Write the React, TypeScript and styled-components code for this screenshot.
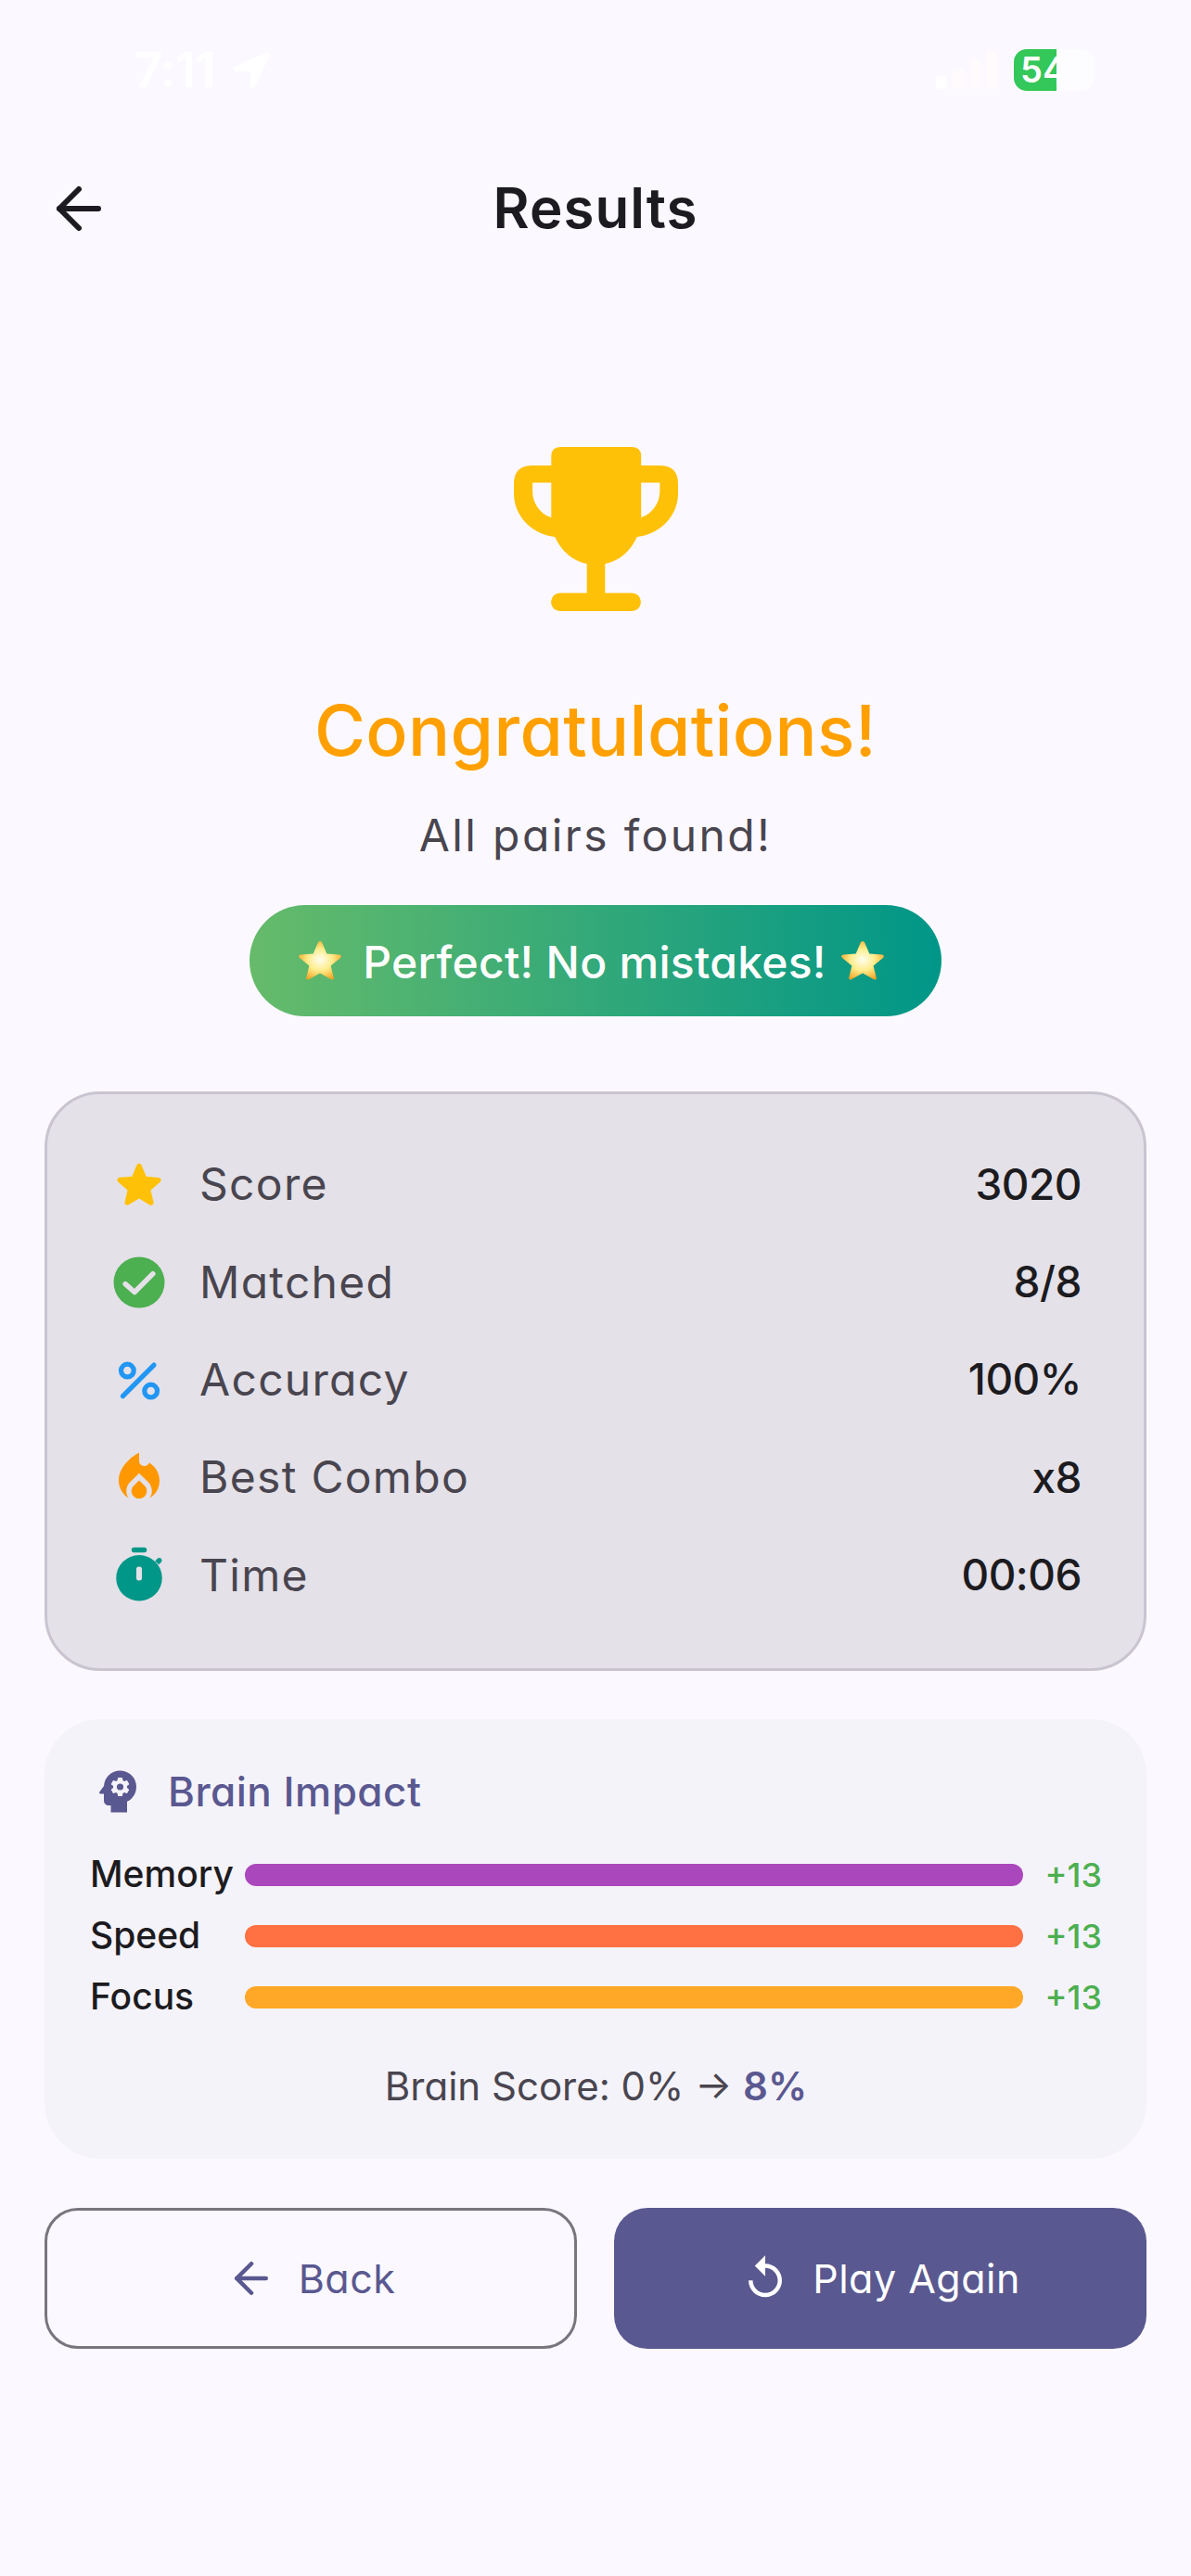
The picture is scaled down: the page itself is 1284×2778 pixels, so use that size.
import React from "react";
import styled, { createGlobalStyle } from "styled-components";
import { ArrowLeft } from "lucide-react";
import { MdPsychology, MdReplay } from "react-icons/md";

const GlobalStyle = createGlobalStyle`
  html, body {
    margin: 0;
    padding: 0;
    background: #fbf9ff;
  }
  * {
    box-sizing: border-box;
  }
  body {
    font-family: Inter, "Liberation Sans", sans-serif;
    font-feature-settings: "cv11" 1;
  }
`;

const stats = [
  { label: "Score", value: "3020", icon: "star" },
  { label: "Matched", value: "8/8", icon: "check" },
  { label: "Accuracy", value: "100%", icon: "percent" },
  { label: "Best Combo", value: "x8", icon: "fire" },
  { label: "Time", value: "00:06", icon: "timer" },
];

const impacts = [
  { label: "Memory", color: "#ab47bc" },
  { label: "Speed", color: "#ff7043" },
  { label: "Focus", color: "#ffa726" },
];

const StatIcon = ({ name }: { name: string }) => {
  if (name === "star") {
    return (
      <IconSvg viewBox="0 0 24 24">
        <path
          fill="#ffc107"
          d="M12 17.27l4.15 2.51c.76.46 1.69-.22 1.49-1.08l-1.1-4.72 3.67-3.18c.67-.58.31-1.68-.57-1.75l-4.83-.41-1.89-4.46c-.34-.81-1.5-.81-1.84 0L9.19 8.63l-4.83.41c-.88.07-1.24 1.17-.57 1.75l3.67 3.18-1.1 4.72c-.2.86.73 1.54 1.49 1.08l4.15-2.5z"
        />
      </IconSvg>
    );
  }
  if (name === "check") {
    return (
      <IconSvg viewBox="0 0 24 24">
        <circle cx="12" cy="12" r="10" fill="#4caf50" />
        <path d="M6.600 12.600l3.600 3.200 7.200-7.200" fill="none" stroke="#e4e1e8" strokeWidth="2" strokeLinecap="round" strokeLinejoin="round" />
      </IconSvg>
    );
  }
  if (name === "percent") {
    return (
      <IconSvg viewBox="0 0 24 24">
        <g fill="none" stroke="#2196f3" strokeWidth="1.9" strokeLinecap="round">
          <circle cx="7.4" cy="8.4" r="2.5" />
          <circle cx="16.6" cy="16.4" r="2.5" />
          <path d="M17.8 6.2L5.6 18.4" />
        </g>
      </IconSvg>
    );
  }
  if (name === "fire") {
    return (
      <IconSvg viewBox="0 0 24 24">
        <path
          fill="#ff9800"
          d="M12 12.9l-2.13 2.09c-.56.56-.87 1.29-.87 2.07C9 18.68 10.35 20 12 20s3-1.32 3-2.94c0-.78-.31-1.52-.87-2.07L12 12.9z"
        />
        <path
          fill="#ff9800"
          d="M16 6l-.44.55C14.38 8.02 12 7.19 12 5.3V2S4 6 4 13c0 2.92 1.56 5.47 3.89 6.86-.56-.79-.89-1.76-.89-2.8 0-1.32.52-2.56 1.47-3.5L12 10.1l3.53 3.47c.95.93 1.47 2.17 1.47 3.5 0 1.02-.31 1.96-.85 2.75 1.89-1.15 3.29-3.06 3.71-5.3.66-3.52-1.07-6.85-3.86-8.52z"
        />
      </IconSvg>
    );
  }
  return (
    <IconSvg viewBox="0 0 24 24">
      <rect x="9" y="1" width="6" height="2" rx="1" fill="#009688" />
      <path fill="#009688" d="M18.3 6.3l1-1a1 1 0 0 1 1.4 1.4l-1 1z" />
      <circle cx="12" cy="13" r="9" fill="#009688" />
      <rect x="10.900" y="8.500" width="2.200" height="5.500" rx="1" fill="#e4e1e8" />
    </IconSvg>
  );
};

const EmojiStar = ({ id }: { id: string }) => (
  <EmojiSvg viewBox="0 0 46 42">
    <defs>
      <radialGradient id={id} cx="50%" cy="48%" r="58%">
        <stop offset="0%" stopColor="#fffef0" />
        <stop offset="50%" stopColor="#ffec8a" />
        <stop offset="100%" stopColor="#f5a01e" />
      </radialGradient>
    </defs>
    <path
      fill={`url(#${id})`}
      d="M23 0c1 0 1.8.7 2.3 1.8l5 11.6 13.4 1.2c2.2.2 2.9 2 1.3 3.3L34.600 26.500l3.100 12.500c.5 2.100-1.100 3.200-2.900 2.100L23 34.500l-11.800 6.600c-1.800 1.100-3.400 0-2.900-2.100l3.100-12.500L1 17.900c-1.600-1.300-.9-3.100 1.300-3.300l13.400-1.200 5-11.600C21.200.7 22 0 23 0z"
    />
  </EmojiSvg>
);

export default function App() {
  return (
    <Screen>
      <GlobalStyle />
      <StatusBar>
        <StatusLeft>
          <Clock>7:11</Clock>
          <svg width="42" height="42" viewBox="0 0 42 42">
            <path fill="#fff" d="M38 1.500c2.200-1 3.800.6 2.800 2.800L24.500 38.800c-1.200 2.600-4.500 2-4.500-1V22.500c0-.5-.3-.8-.8-.8H4c-3 0-3.500-3.300-1-4.500z" />
          </svg>
        </StatusLeft>
        <StatusRight>
          <Signal>
            <SignalBar $height={14} $faint={false} />
            <SignalBar $height={22} $faint />
            <SignalBar $height={32} $faint />
            <SignalBar $height={41} $faint />
          </Signal>
          <Battery>
            <BatteryFill style={{ width: "53%" }} />
            <BatteryLabel>54</BatteryLabel>
          </Battery>
        </StatusRight>
      </StatusBar>

      <AppBar>
        <BackIcon size={72} strokeWidth={2} color="#1c1b1f" />
        <Title>Results</Title>
      </AppBar>

      <Hero>
        <svg width="177" height="177" viewBox="0 0 180 177" preserveAspectRatio="none">
          <path
            fill="#ffc107"
            fillRule="evenodd"
            d="M51 0H129.500Q139.500 0 139.500 10V20H160Q180 20 180 40V50C180 75 160 94 135 97C128 112 116 123 100 126V157.500H129.500A9.750 9.750 0 0 1 129.500 177H50.500A9.750 9.750 0 0 1 50.500 157.500H80V126C64 123 52 112 45 97C20 94 0 75 0 50V40Q0 20 20 20H41V10Q41 0 51 0ZM20.500 38.500H41V76C28 72 20.500 60 20.500 48ZM139.500 38.500H160V48C160 60 152 72 139.500 76Z"
          />
        </svg>
        <Congrats>Congratulations!</Congrats>
        <Subtitle>All pairs found!</Subtitle>
        <PerfectPill>
          <EmojiStar id="starLeft" />
          <PillText>Perfect! No mistakes!</PillText>
          <EmojiStar id="starRight" />
        </PerfectPill>
      </Hero>

      <StatsCard>
        {stats.map((item) => (
          <StatRow key={item.label}>
            <StatIcon name={item.icon} />
            <StatLabel>{item.label}</StatLabel>
            <StatValue>{item.value}</StatValue>
          </StatRow>
        ))}
      </StatsCard>

      <BrainCard>
        <BrainHeader>
          <MdPsychology size={60} color="#5a5890" />
          <BrainTitle>Brain Impact</BrainTitle>
        </BrainHeader>
        <ImpactList>
          {impacts.map((item) => (
            <ImpactRow key={item.label}>
              <ImpactLabel>{item.label}</ImpactLabel>
              <ImpactBar $color={item.color} />
              <ImpactValue>+13</ImpactValue>
            </ImpactRow>
          ))}
        </ImpactList>
        <BrainScore>
          Brain Score: 0% → <BrainScoreValue>8%</BrainScoreValue>
        </BrainScore>
      </BrainCard>

      <Actions>
        <OutlineButton>
          <ArrowLeft size={54} strokeWidth={2} color="#5a5890" />
          Back
        </OutlineButton>
        <FilledButton>
          <MdReplay size={54} color="#fff" />
          Play Again
        </FilledButton>
      </Actions>
    </Screen>
  );
}

const Screen = styled.div`
  width: 1284px;
  height: 2778px;
  background: #fbf9ff;
  display: flex;
  flex-direction: column;
  overflow: hidden;
`;

const StatusBar = styled.div`
  height: 141px;
  padding: 53px 104px 0 145px;
  display: flex;
  justify-content: space-between;
  align-items: flex-start;
`;

const StatusLeft = styled.div`
  display: flex;
  align-items: center;
  gap: 18px;
  height: 45px;
`;

const Clock = styled.span`
  font-size: 52px;
  font-weight: 600;
  line-height: 45px;
  letter-spacing: -0.5px;
  color: #fff;
`;

const StatusRight = styled.div`
  display: flex;
  align-items: flex-end;
  gap: 18px;
  height: 45px;
`;

const Signal = styled.div`
  display: flex;
  align-items: flex-end;
  gap: 6px;
  padding-bottom: 2px;
`;

const SignalBar = styled.div<{ $height: number; $faint: boolean }>`
  width: 12px;
  height: ${(props) => props.$height}px;
  border-radius: 4px;
  background: ${(props) => (props.$faint ? "#fffbfd" : "#ffffff")};
`;

const Battery = styled.div`
  position: relative;
  width: 87px;
  height: 45px;
  border-radius: 14px;
  background: #fdfcff;
  overflow: hidden;
`;

const BatteryFill = styled.div`
  position: absolute;
  left: 0;
  top: 0;
  bottom: 0;
  background: #34c759;
`;

const BatteryLabel = styled.span`
  position: absolute;
  left: 7px;
  top: 0;
  font-size: 38px;
  line-height: 45px;
  font-weight: 600;
  color: #fff;
`;

const AppBar = styled.div`
  position: relative;
  height: 168px;
  display: flex;
  align-items: center;
  justify-content: center;
`;

const BackIcon = styled(ArrowLeft)`
  position: absolute;
  left: 49px;
  top: 48px;
`;

const Title = styled.h1`
  margin: 0 0 2px;
  font-size: 60px;
  line-height: 84px;
  font-weight: 600;
  letter-spacing: 1px;
  color: #1c1b1f;
`;

const Hero = styled.div`
  padding-top: 173px;
  display: flex;
  flex-direction: column;
  align-items: center;
`;

const Congrats = styled.div`
  margin-top: 79px;
  font-size: 75px;
  line-height: 100px;
  font-weight: 500;
  letter-spacing: 0.4px;
  color: #ffa000;
`;

const Subtitle = styled.div`
  margin-top: 27px;
  font-size: 48px;
  line-height: 72px;
  font-weight: 400;
  letter-spacing: 2.4px;
  color: #49454f;
`;

const PerfectPill = styled.div`
  margin-top: 39px;
  width: 746px;
  height: 120px;
  padding-right: 9px;
  border-radius: 60px;
  background: linear-gradient(90deg, #66bb6a, #009688);
  display: flex;
  align-items: center;
  justify-content: center;
`;

const EmojiSvg = styled.svg`
  width: 46px;
  height: 42px;
  flex: none;
`;

const PillText = styled.span`
  margin: 4px 16px 0 23px;
  font-size: 48px;
  line-height: 72px;
  font-weight: 500;
  letter-spacing: 0.3px;
  color: #fff;
`;

const StatsCard = styled.div`
  margin: 81px 48px 0;
  height: 625px;
  padding: 45px 67px 0 66px;
  border: 3px solid #cac4d0;
  border-radius: 60px;
  background: #e4e1e8;
`;

const StatRow = styled.div`
  height: 105.4px;
  display: flex;
  align-items: center;
`;

const IconSvg = styled.svg`
  width: 66px;
  height: 66px;
  flex: none;
`;

const StatLabel = styled.span`
  margin: 0 0 2px 32px;
  font-size: 48px;
  font-weight: 400;
  letter-spacing: 1.3px;
  color: #49454f;
`;

const StatValue = styled.span`
  margin: 0 0 2px auto;
  font-size: 46px;
  font-weight: 500;
  letter-spacing: -0.5px;
  color: #1c1b1f;
`;

const BrainCard = styled.div`
  margin: 52px 48px 0;
  height: 474px;
  padding: 48px 48px 0 49px;
  border-radius: 60px;
  background: #f5f3fa;
`;

const BrainHeader = styled.div`
  height: 60px;
  display: flex;
  align-items: center;
  gap: 24px;
`;

const BrainTitle = styled.span`
  font-size: 44px;
  font-weight: 500;
  letter-spacing: 0.5px;
  color: #5a5890;
`;

const ImpactList = styled.div`
  margin-top: 27px;
  display: flex;
  flex-direction: column;
`;

const ImpactRow = styled.div`
  height: 66px;
  display: grid;
  grid-template-columns: 167px 1fr 85px;
  align-items: center;
`;

const ImpactLabel = styled.span`
  padding-bottom: 3px;
  font-size: 39px;
  font-weight: 500;
  color: #1c1b1f;
`;

const ImpactBar = styled.div<{ $color: string }>`
  height: 24px;
  border-radius: 12px;
  background: ${(props) => props.$color};
`;

const ImpactValue = styled.span`
  justify-self: end;
  font-size: 36px;
  font-weight: 500;
  color: #4caf50;
`;

const BrainScore = styled.div`
  margin-top: 33px;
  line-height: 60px;
  text-align: center;
  font-size: 42px;
  font-weight: 400;
  color: #49454f;
`;

const BrainScoreValue = styled.span`
  font-weight: 600;
  color: #5a5890;
`;

const Actions = styled.div`
  margin: 53px 48px 0;
  display: grid;
  grid-template-columns: 1fr 1fr;
  gap: 40px;
`;

const OutlineButton = styled.button`
  height: 152px;
  border: 3px solid #79747e;
  border-radius: 36px;
  background: transparent;
  display: flex;
  align-items: center;
  justify-content: center;
  gap: 24px;
  font-family: inherit;
  font-feature-settings: inherit;
  font-size: 43px;
  font-weight: 400;
  letter-spacing: 0.5px;
  color: #5a5890;
`;

const FilledButton = styled(OutlineButton)`
  border: none;
  background: #5a5890;
  color: #fff;
`;
